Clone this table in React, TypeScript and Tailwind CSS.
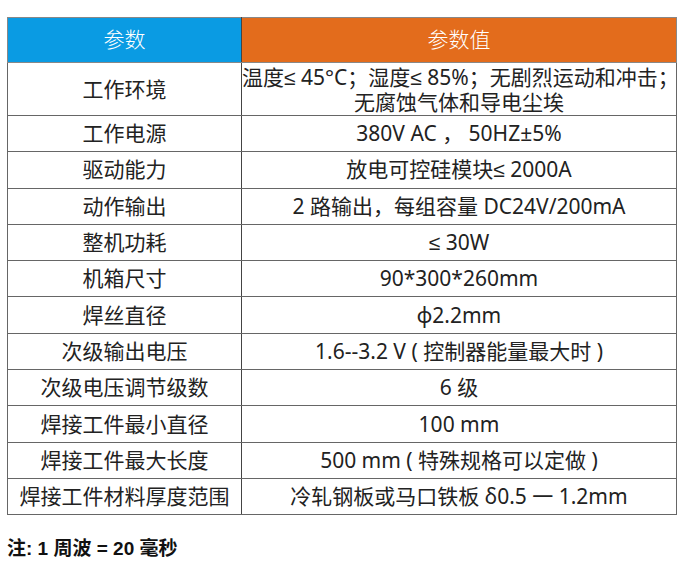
const Le = () => <span className="font-['Liberation_Sans',sans-serif]">≤</span>;

const rows: [string, React.ReactNode][] = [
  ["工作电源", "380V AC ， 50HZ±5%"],
  ["驱动能力", <>放电可控硅模块<Le /> 2000A</>],
  ["动作输出", "2 路输出，每组容量 DC24V/200mA"],
  ["整机功耗", <><Le /> 30W</>],
  ["机箱尺寸", "90*300*260mm"],
  ["焊丝直径", "ф2.2mm"],
  ["次级输出电压", "1.6--3.2 V ( 控制器能量最大时 )"],
  ["次级电压调节级数", "6 级"],
  ["焊接工件最小直径", "100 mm"],
  ["焊接工件最大长度", "500 mm ( 特殊规格可以定做 )"],
  ["焊接工件材料厚度范围", "冷轧钢板或马口铁板 δ0.5 一 1.2mm"],
];

export default function App() {
  return (
    <div className="w-[689px] h-[563px] bg-white pt-[17px] px-[7px] font-['Noto_Sans','Noto_Sans_CJK_SC',sans-serif] text-[#222]">
      <table className="w-[670px] border-collapse table-fixed">
        <colgroup>
          <col className="w-[234px]" />
          <col />
        </colgroup>
        <thead>
          <tr className="h-[45px] text-white text-[21px]">
            <th className="bg-[#0a9be3] border border-[#888] border-r-[#444] font-light">参数</th>
            <th className="bg-[#e36c1c] border border-[#888] font-light">参数值</th>
          </tr>
        </thead>
        <tbody className="text-[21px]">
          <tr className="h-[53px]">
            <td className="border border-[#666] border-r-[#444] text-center leading-none">工作环境</td>
            <td className="border border-[#666] text-center leading-[24px] whitespace-nowrap">
              温度<Le /> 45°C；湿度<Le /> 85%；无剧烈运动和冲击；
              <br />
              无腐蚀气体和导电尘埃
            </td>
          </tr>
          {rows.map(([k, v]) => (
            <tr key={k} className="h-[36.3px]">
              <td className="border border-[#666] border-r-[#444] text-center leading-none">{k}</td>
              <td className="border border-[#666] text-center leading-none whitespace-nowrap">{v}</td>
            </tr>
          ))}
        </tbody>
      </table>
      <p className="mt-[22px] text-[19px] leading-[24px] font-bold text-[#111] font-['Liberation_Sans','Noto_Sans_CJK_SC',sans-serif]">
        注: 1 周波 = 20 毫秒
      </p>
    </div>
  );
}
